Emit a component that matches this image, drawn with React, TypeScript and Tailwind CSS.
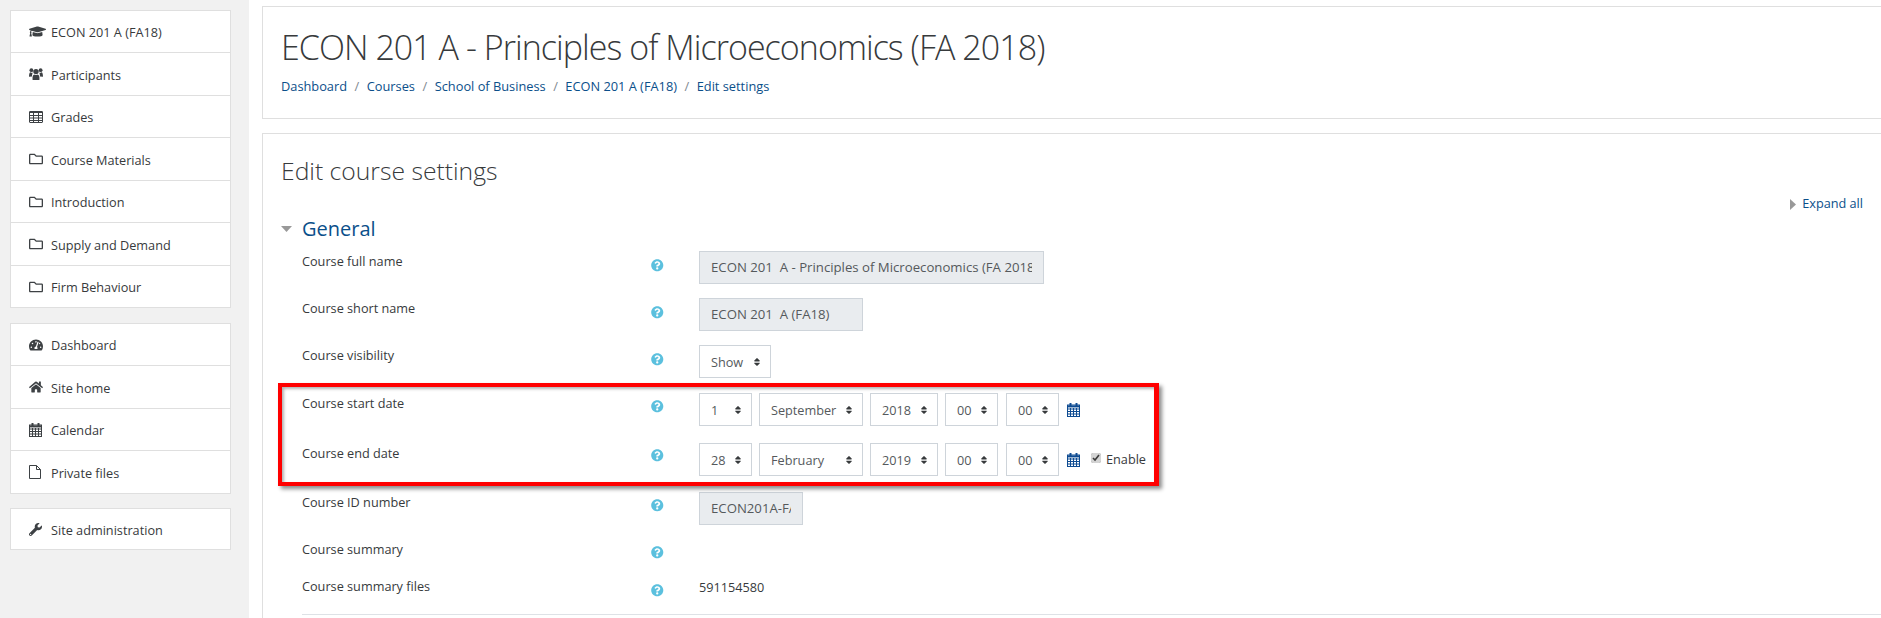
import React from "react";
import { FaGraduationCap, FaRegFolder, FaTachometerAlt, FaHome, FaWrench, FaQuestionCircle, FaSort } from "react-icons/fa";

const font = { fontFamily: '"Open Sans", sans-serif' };

function UsersIcon() {
  return (
    <svg width="14" height="14" viewBox="0 0 14 14" fill="currentColor">
      <circle cx="7" cy="4.6" r="2.7" />
      <circle cx="2.4" cy="3.2" r="1.9" />
      <circle cx="11.6" cy="3.2" r="1.9" />
      <path d="M3.6 13 C3.2 9.5 4 7.6 5.4 7.4 C6.4 8.1 7.6 8.1 8.6 7.4 C10 7.6 10.8 9.5 10.4 13 Z" />
      <path d="M0 9.8 C0 7 0.5 5.4 1.6 5.3 C2.4 5.9 3.1 5.9 3.8 5.6 C3.4 6.6 3 7.6 3 9.6 Z" />
      <path d="M14 9.8 C14 7 13.5 5.4 12.4 5.3 C11.6 5.9 10.9 5.9 10.2 5.6 C10.6 6.6 11 7.6 11 9.6 Z" />
    </svg>
  );
}

function TableIcon() {
  return (
    <svg width="14" height="12" viewBox="0 0 14 12" fill="none" stroke="currentColor" strokeWidth="1">
      <rect x="0.5" y="0.5" width="13" height="11" rx="0.5" />
      <path d="M0.5 1.5 H13.5 M0.5 1 H13.5" strokeWidth="1.2" />
      <path d="M0.5 4.5 H13.5 M0.5 7 H13.5 M0.5 9.5 H13.5 M4.5 1 V11.5 M9.5 1 V11.5" />
    </svg>
  );
}

function CalendarIcon({ h = 14 }: { h?: number }) {
  return (
    <svg width="13" height={h} viewBox="0 0 13 14" fill="none" stroke="currentColor" strokeWidth="1">
      <rect x="0.5" y="2" width="12" height="11.5" />
      <path d="M0.5 3.4 H12.5" strokeWidth="2" />
      <path d="M0.5 6 H12.5 M0.5 8.5 H12.5 M0.5 11 H12.5 M3.5 5 V13.5 M6.5 5 V13.5 M9.5 5 V13.5" />
      <path d="M3.5 0.5 V3 M9.5 0.5 V3" strokeWidth="2" strokeLinecap="round" />
    </svg>
  );
}

function FileIcon() {
  return (
    <svg width="12" height="14" viewBox="0 0 12 14" fill="none" stroke="currentColor" strokeWidth="1">
      <path d="M0.5 0.5 H7.5 L11.5 4.5 V13.5 H0.5 Z M7.5 0.5 V4.5 H11.5" />
    </svg>
  );
}

function NavRow({ icon, label, h, last }: { icon: React.ReactNode; label: string; h: string; last?: boolean }) {
  return (
    <div className={`${h} ${last ? "" : "border-b border-[#dfdfdf]"} flex items-center pl-[18px] text-[12.7px] text-[#373a3c]`}>
      <span className="w-[14px] flex justify-start items-center text-[#3d4144] mr-[8px]">{icon}</span>
      <span className="pt-[3px]">{label}</span>
    </div>
  );
}

function Sel({ w, v, cls = "" }: { w: string; v: string; cls?: string }) {
  return (
    <div className={`${w} ${cls} h-[33px] border border-[#ced4da] bg-white flex items-center justify-between pl-[11px] pr-[8px] text-[12.7px] text-[#55595c] shrink-0`}>
      <span className="pt-[2px]">{v}</span>
      <FaSort className="text-[10px] text-[#373a3c]" />
    </div>
  );
}

function Ro({ w, v }: { w: string; v: string }) {
  return (
    <div className={`${w} h-[33px] border border-[#ced4da] bg-[#e9ecef] flex items-center px-[11px] text-[13.2px] text-[#55595c]`}>
      <span className="overflow-hidden block w-full whitespace-pre pt-[1px]">{v}</span>
    </div>
  );
}

function Row({ label, h, children, labelPt = "pt-[1px]", helpPt = "pt-[8px]" }: { label: string; h: string; children?: React.ReactNode; labelPt?: string; helpPt?: string }) {
  return (
    <div className={`${h} flex text-[12.7px] text-[#373a3c]`}>
      <div className={`w-[349px] shrink-0 ${labelPt}`}>{label}</div>
      <div className={`w-[48px] shrink-0 ${helpPt}`}>
        <FaQuestionCircle className="text-[12.5px] text-[#5bc0de]" />
      </div>
      <div className="flex-1 flex gap-[7px]">{children}</div>
    </div>
  );
}

function DateRow({ a, m, y, extra }: { a: string; m: string; y: string; extra?: boolean }) {
  return (
    <>
      <Sel w="w-[53px]" v={a} />
      <Sel w="w-[104px]" v={m} />
      <Sel w="w-[68px]" v={y} />
      <Sel w="w-[53px]" v="00" />
      <Sel w="w-[53px]" v="00" cls="ml-[1px]" />
      <div className="flex items-center h-[33px] ml-[1px] text-[#0f4c92]">
        <CalendarIcon />
        {extra && (
          <span className="flex items-center gap-[5px] ml-[11px] text-[#373a3c]">
            <input type="checkbox" defaultChecked readOnly className="w-[10px] h-[10px] accent-[#d4d4d4] -mt-[2px]" />
            <span className="pt-[1px]">Enable</span>
          </span>
        )}
      </div>
    </>
  );
}

export default function App() {
  return (
    <div style={font} className="relative w-[1881px] h-[618px] overflow-hidden bg-white flex">
      <aside className="w-[249px] shrink-0 bg-[#f1f1f1] pt-[10px] pl-[10px] pr-[18px] flex flex-col gap-[15px]">
        <div className="border border-[#dfdfdf] bg-white">
          <NavRow h="h-[42px]" icon={<FaGraduationCap className="text-[17px] shrink-0" />} label="ECON 201 A (FA18)" />
          <NavRow h="h-[43px]" icon={<UsersIcon />} label="Participants" />
          <NavRow h="h-[42px]" icon={<TableIcon />} label="Grades" />
          <NavRow h="h-[43px]" icon={<FaRegFolder className="text-[14px]" />} label="Course Materials" />
          <NavRow h="h-[42px]" icon={<FaRegFolder className="text-[14px]" />} label="Introduction" />
          <NavRow h="h-[43px]" icon={<FaRegFolder className="text-[14px]" />} label="Supply and Demand" />
          <NavRow h="h-[41px]" last icon={<FaRegFolder className="text-[14px]" />} label="Firm Behaviour" />
        </div>
        <div className="border border-[#dfdfdf] bg-white">
          <NavRow h="h-[42px]" icon={<FaTachometerAlt className="text-[14px]" />} label="Dashboard" />
          <NavRow h="h-[43px]" icon={<FaHome className="text-[14px]" />} label="Site home" />
          <NavRow h="h-[42px]" icon={<CalendarIcon />} label="Calendar" />
          <NavRow h="h-[42px]" last icon={<FileIcon />} label="Private files" />
        </div>
        <div className="border border-[#dfdfdf] bg-white -mt-[1px]">
          <NavRow h="h-[40px]" last icon={<FaWrench className="text-[13px]" />} label="Site administration" />
        </div>
      </aside>
      <main className="flex-1 pl-[13px] pt-[6px] flex flex-col gap-[14px] min-w-0">
        <section className="h-[113px] border border-r-0 border-[#dfdfdf] pl-[18px] pt-[21px]">
          <h1 className="text-[34px] leading-[38px] tracking-[-0.96px] font-light text-[#373a3c] whitespace-nowrap">ECON 201 A - Principles of Microeconomics (FA 2018)</h1>
          <nav className="mt-[11px] flex gap-[7.5px] text-[12.8px] text-[#0b4f8a]">
            <span>Dashboard</span><span className="text-[#818a91]">/</span>
            <span>Courses</span><span className="text-[#818a91]">/</span>
            <span>School of Business</span><span className="text-[#818a91]">/</span>
            <span>ECON 201 A (FA18)</span><span className="text-[#818a91]">/</span>
            <span>Edit settings</span>
          </nav>
        </section>
        <section className="flex-1 border-t border-l border-[#dfdfdf] pl-[18px] pt-[22px]">
          <h2 className="text-[24.7px] leading-[30px] font-light text-[#373a3c]">Edit course settings</h2>
          <div className="flex justify-end items-center pr-[18px] mt-[8px] h-[20px] text-[12.7px] text-[#0b4f8a] gap-[6px]">
            <svg width="6" height="11" viewBox="0 0 6 11"><path d="M0 0 L6 5.5 L0 11 Z" fill="#999" /></svg>
            <span>Expand all</span>
          </div>
          <div className="flex items-center h-[26px] mt-[2px] gap-[10px]">
            <svg width="11" height="6" viewBox="0 0 11 6"><path d="M0 0 H11 L5.5 6 Z" fill="#999" /></svg>
            <span className="text-[20px] text-[#0b4f8a]">General</span>
          </div>
          <div className="pl-[21px] mt-[9px]">
            <Row label="Course full name" h="h-[47px]"><Ro w="w-[345px]" v="ECON 201  A - Principles of Microeconomics (FA 2018)" /></Row>
            <Row label="Course short name" h="h-[47px]"><Ro w="w-[164px]" v="ECON 201  A (FA18)" /></Row>
            <Row label="Course visibility" h="h-[48px]"><Sel w="w-[72px]" v="Show" /></Row>
            <Row label="Course start date" h="h-[50px]" helpPt="pt-[7px]"><DateRow a="1" m="September" y="2018" /></Row>
            <Row label="Course end date" h="h-[49px]" helpPt="pt-[6px]"><DateRow a="28" m="February" y="2019" extra /></Row>
            <Row label="Course ID number" h="h-[47px]" helpPt="pt-[7px]"><Ro w="w-[104px]" v="ECON201A-FA18" /></Row>
            <Row label="Course summary" h="h-[37px]" helpPt="pt-[7px]" />
            <Row label="Course summary files" h="h-[38px]">
              <span className="pt-[2px]">591154580</span>
            </Row>
            <div className="border-t border-[#dee2e6] h-[2px]" />
          </div>
        </section>
      </main>
      <div className="absolute left-[278px] top-[383px] w-[881px] h-[103px] border-[4px] border-r-[5px] border-[#ff0000] shadow-[3px_3px_4px_rgba(0,0,0,0.45),inset_2px_2px_3px_rgba(0,0,0,0.3)] pointer-events-none" />
    </div>
  );
}
